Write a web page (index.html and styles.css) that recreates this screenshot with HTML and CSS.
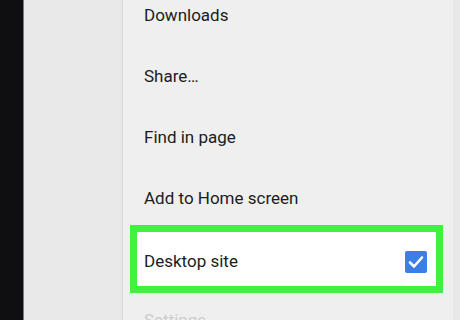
FILE: index.html
```html
<!DOCTYPE html>
<html lang="en">
<head>
    <meta charset="UTF-8">
    <meta name="viewport" content="width=device-width, initial-scale=1.0">
    <title>Browser menu</title>
    <link rel="stylesheet" href="styles.css">
</head>
<body>

    <div class="screen">
        <!-- Phone bezel on the left -->
        <div class="bezel"></div>

        <!-- Page behind the menu -->
        <div class="page"></div>

        <!-- Overflow menu -->
        <ul class="menu">
            <li class="menu-item">Downloads</li>
            <li class="menu-item">Share…</li>
            <li class="menu-item">Find in page</li>
            <li class="menu-item">Add to Home screen</li>
            <li class="menu-item highlight">
                <span>Desktop site</span>
                <span class="checkbox">
                    <svg width="16" height="14" viewBox="0 0 16 14">
                        <path d="M2 7.5 L6 11.5 L14 2.5" fill="none" stroke="#ffffff" stroke-width="2.6" stroke-linecap="round" stroke-linejoin="round"/>
                    </svg>
                </span>
            </li>
            <li class="menu-item faded">Settings</li>
        </ul>

        <div class="page-edge"></div>
    </div>

</body>
</html>
```

FILE: styles.css
```css
body {
    margin: 0;
    font-family: Roboto, "Noto Sans", Arial, sans-serif;
    background-color: #e9e9e9;
}

.screen {
    display: flex;
    width: 460px;
    height: 320px;
    overflow: hidden;
}

/* Black phone frame */
.bezel {
    width: 23px;
    flex-shrink: 0;
    background-color: #0f0f11;
    border-right: 1px solid #7a7a7a;
}

.page {
    width: 98px;
    flex-shrink: 0;
    background-color: #e9e9e9;
}

/* Menu panel */
.menu {
    width: 330px;
    flex-shrink: 0;
    margin: 0;
    padding: 0;
    list-style: none;
    background-color: #efefef;
    border-left: 1px solid #d9d9d9;
    box-shadow: 1px 0 3px rgba(0, 0, 0, 0.12);
}

.menu-item {
    height: 61px;
    line-height: 61px;
    padding-left: 21px;
    font-size: 17px;
    color: #1c1c1c;
    white-space: nowrap;
}

.menu-item:first-child {
    margin-top: -15px;
}

/* Green highlight around the Desktop site row */
.highlight {
    display: flex;
    align-items: center;
    justify-content: space-between;
    height: 50px;
    line-height: 50px;
    margin: -4px 10px -3px 7px;
    padding: 4px 9px 0 7px;
    background-color: #ffffff;
    border: 7px solid #43ef43;
}

.checkbox {
    display: flex;
    align-items: center;
    justify-content: center;
    width: 22px;
    height: 22px;
    margin-bottom: -2px;
    background-color: #3b7fe6;
    border-radius: 2px;
}

.faded {
    color: #cdcdcd;
}

.page-edge {
    flex: 1;
    background-color: #e8e8e8;
}
```
